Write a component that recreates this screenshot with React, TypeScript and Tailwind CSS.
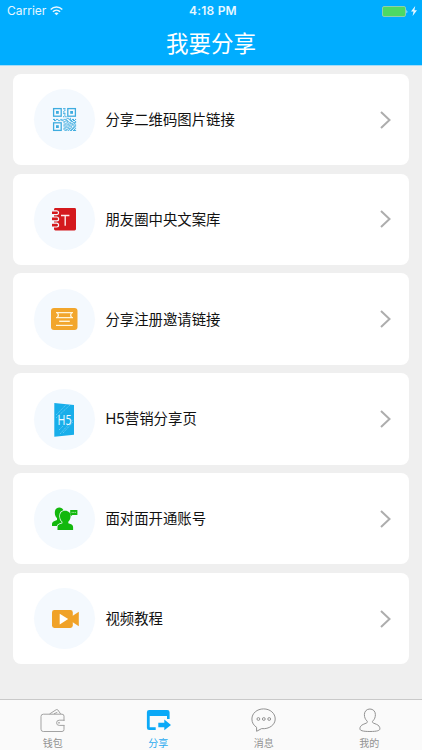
import React from 'react';

const qrModules = [
  '110', '010', '100', '110', '010', '101',
];

const qrBody = [
  '0000000000000110100000',
  '1101100110111001101101',
  '0110011011001100110110',
  '0000000000110110011001',
  '0000000000100101100111',
  '0000000000011010111010',
  '0000000000110111001101',
  '0000000000101001110011',
  '0000000000011110010110',
  '0000000000110011101101',
  '0000000000101101011010',
  '0000000000011010110111',
];

const QrIcon = () => (
  <svg viewBox="0 0 61 61" className="h-full w-full" fill="#3eacdf">
    {[[19, 19], [33.2, 19], [19, 33.2]].map(([x, y]) => (
      <g key={`${x}-${y}`}>
        <rect x={x + 0.6} y={y + 0.6} width="7.6" height="7.6" fill="none" stroke="#3eacdf" strokeWidth="1.3" />
        <rect x={x + 3} y={y + 3} width="2.8" height="2.8" />
      </g>
    ))}
    {qrModules.map((row, r) =>
      row.split('').map((c, i) =>
        c === '1' && <rect key={`${r}-${i}`} x={29.2 + i * 1.05} y={19 + r * 1.6} width="1.2" height="1.3" />
      )
    )}
    {qrBody.map((row, r) =>
      row.split('').map((c, i) =>
        c === '1' && <rect key={`b${r}-${i}`} x={19 + i * 1.05} y={28.8 + r * 1.1} width="1.05" height="1.1" />
      )
    )}
  </svg>
);

const NotebookIcon = () => (
  <svg viewBox="0 0 61 61" className="h-full w-full">
    <rect x="20" y="19" width="22" height="22.4" rx="1.4" fill="#d4191d" />
    {[22.2, 28.4, 34.6].map((y) => (
      <g key={y}>
        <path d={`M18 ${y - 0.4}h4.7a1.9 1.9 0 0 1 0 3.8H18`} fill="#d4191d" stroke="#f4f9fe" strokeWidth="1.2" />
        <rect x="18" y={y + 0.9} width="4.2" height="1.5" rx=".7" fill="#d4191d" />
      </g>
    ))}
    <path d="M27 26.5H35.4M31.2 26.5V36.8" stroke="#fdeaea" strokeWidth="1.4" fill="none" />
  </svg>
);

const InviteIcon = () => (
  <svg viewBox="0 0 61 61" className="h-full w-full">
    <rect x="17" y="19" width="26.5" height="22" rx="3" fill="#f2a62c" />
    <g fill="none" stroke="#fff4d8" strokeWidth="1.2">
      <path d="M22 23.7H39M22 28.7H39" />
      <path d="M23.3 23.7q2.2 2.5 0 5M37.7 23.7q-2.2 2.5 0 5" />
      <path d="M25.2 32.3H35.8" strokeWidth="1.4" />
      <path d="M22 36.4H38.7" />
    </g>
  </svg>
);

const H5Icon = () => (
  <svg viewBox="0 0 61 61" className="h-full w-full">
    <path d="M20.3 14L40 16V45.7L20.3 47.8Z" fill="#18aeea" />
    <g stroke="#7bd3f6" strokeWidth=".7" strokeDasharray="1.5 .7">
      <path d="M22 26L32 15.8M22 29L36 16M29 44L39 33M26 45L39 30.5M25 41L29 37" />
    </g>
    <text x="23.6" y="35.8" fill="#f2fbff" fontSize="14" textLength="14" lengthAdjust="spacingAndGlyphs" fontFamily="Open Sans, sans-serif">H5</text>
  </svg>
);

const PeopleIcon = () => (
  <svg viewBox="0 0 61 61" className="h-full w-full" fill="#13b80d">
    <path d="M25.3 18.5c3 0 4.7 2.2 4.5 5.2-.2 2.7-1.4 4.1-2.2 5.2v2l4 2.6V37H18v-1.8c0-1.7 1-2.5 2.6-3.1l2.4-1v-2c-1.2-1.2-2.2-3-2.2-5.4 0-3 1.5-5.2 4.5-5.2Z" />
    <path d="M31.2 21.8c3.4 0 5.5 2.3 5.4 5.4-.1 2.5-1 4.3-2.3 5.6v1.4l2.8 1c1.400.5 2 1.600 2 3v2.800H23.500v-2.800c0-1.600.6-2.500 2-3l2.900-1v-1.400c-1.400-1.300-2.400-3.300-2.400-5.600 0-3.200 1.900-5.400 5.200-5.400Z" stroke="#f4f9fe" strokeWidth="1.5" paintOrder="stroke" />
    <path d="M36.2 21h7.2v5h-5.1l-1.4 1.2V26h-.7Z" />
    <path d="M37.6 23.4h4.7" stroke="#a7e8a5" strokeWidth="1" strokeDasharray="1.1 .5" />
  </svg>
);

const VideoIcon = () => (
  <svg viewBox="0 0 61 61" className="h-full w-full">
    <rect x="18" y="22" width="20.8" height="18" rx="2.4" fill="#f0a228" />
    <path d="M38 28.2L44.8 23.8V38.2L38 33.8Z" fill="#f0a228" />
    <path d="M25.7 25.7L34.2 31L25.7 36.5Z" fill="#fff" />
  </svg>
);

const items = [
  { title: '分享二维码图片链接', icon: <QrIcon /> },
  { title: '朋友圈中央文案库', icon: <NotebookIcon /> },
  { title: '分享注册邀请链接', icon: <InviteIcon /> },
  { title: 'H5营销分享页', icon: <H5Icon /> },
  { title: '面对面开通账号', icon: <PeopleIcon /> },
  { title: '视频教程', icon: <VideoIcon /> },
];

const tabs = [
  {
    label: '钱包',
    icon: (
      <g fill="none" stroke="#a3a3a3" strokeWidth="1">
        <path d="M26 13V8.2a2 2 0 0 0-2-2H5.3A2.3 2.3 0 0 0 3 8.5v12.7a2.3 2.3 0 0 0 2.3 2.3H24a2 2 0 0 0 2-2V17" />
        <path d="M26.4 12.2h-5.2a2.6 2.6 0 0 0 0 5.2h5.2" />
        <path d="M11.5 6L18.2 1.7q1-.6 1.7.3L22.7 6M16 5.8l3.3-1.5" />
        <circle cx="21" cy="14.8" r=".5" />
      </g>
    ),
  },
  {
    label: '分享',
    active: true,
    icon: (
      <g fill="#0ba9f7">
        <path d="M5.2 2H23.3a2.3 2.3 0 0 1 2.3 2.3V11h-2.6V8H5.7v11.3h6V22H5.2A2.3 2.3 0 0 1 2.9 19.7V4.3A2.3 2.3 0 0 1 5.2 2Z" />
        <path d="M14.3 14.8H20.3V11.6L27 17L20.3 22.3V19.2H14.3Z" />
      </g>
    ),
  },
  {
    label: '消息',
    icon: (
      <g fill="none" stroke="#929292" strokeWidth="1">
        <path d="M14.6 .9C8 .9 2.9 5.3 2.9 11c0 3.7 1.9 6.500 4.700 8.300v4l5-2.700c7.500.8 13.600-3.700 13.600-9.600C26.200 5.300 21.200.9 14.600.9Z" />
        <circle cx="9.4" cy="11" r="1.4" />
        <circle cx="14.8" cy="11" r="1.4" />
        <circle cx="20.2" cy="11" r="1.4" />
      </g>
    ),
  },
  {
    label: '我的',
    icon: (
      <path d="M14.9 1C11.7 1 9.4 3.3 9.4 6.6c0 2.7.9 4.7 2.5 6.3 1 1 .5 1.7-.6 2.2l-3.1 1.3c-2 .8-3.3 2.3-3.3 4.4 0 1.6 2.4 2.7 10 2.7s10-1.1 10-2.7c0-2.1-1.3-3.6-3.3-4.4l-3.1-1.3c-1.1-.5-1.6-1.2-.6-2.2 1.6-1.6 2.5-3.6 2.5-6.3C20.4 3.3 18.1 1 14.9 1Z" fill="none" stroke="#929292" strokeWidth="1" />
    ),
  },
];

const StatusBar = () => (
  <div className="grid h-[22px] grid-cols-3 items-center pr-[5px] pl-[7px] text-[12px] leading-none text-[#e7f7ff]">
    <div className="flex items-center gap-1">
      <span>Carrier</span>
      <svg width="13" height="10" viewBox="0 0 13 10" fill="none" stroke="currentColor" strokeWidth="1.5">
        <path d="M.7 3.5C4 .1 9 .1 12.3 3.5M2.9 5.7c2.1-2.1 5.1-2.1 7.2 0" />
        <path d="M6.5 9.3L4.4 7.2q2.1-1.6 4.2 0Z" fill="currentColor" stroke="none" />
      </svg>
    </div>
    <span className="pl-0.5 text-center font-semibold tracking-[0.2px]">4:18 PM</span>
    <div className="flex items-center justify-end gap-[3px]">
      <svg width="26" height="11" viewBox="0 0 26 11">
        <rect x=".5" y=".5" width="23" height="10" rx="1.5" fill="#4cd964" stroke="#8ccfae" />
        <path d="M24.5 3.5q1.5 2 0 4Z" fill="#d9f5ff" />
      </svg>
      <svg width="6" height="10" viewBox="0 0 6 10" fill="#e7f7ff">
        <path d="M4.2 0L0 5.6H2.5L1.6 10L6 4.2H3.4Z" />
      </svg>
    </div>
  </div>
);

const App: React.FC = () => {
  return (
    <div className="flex h-[750px] w-[422px] flex-col overflow-hidden bg-[#efefef] font-['Inter','Noto_Sans_CJK_SC',sans-serif]">
      <header className="h-[66px] shrink-0 border-b border-[#a5dcf8] bg-[#00adff]">
        <StatusBar />
        <h1 className="text-center text-[22.5px] leading-[43px] font-normal text-white">我要分享</h1>
      </header>

      <main className="flex flex-1 flex-col gap-[8.3px] px-[13.4px] pt-[7.8px]">
        {items.map((item) => (
          <div key={item.title} className="flex h-[91.5px] shrink-0 items-center rounded-[8px] bg-white pr-[18px] pl-[20.6px]">
            <div className="mt-[0.6px] h-[61px] w-[61px] shrink-0 rounded-full bg-[#f4f9fe]">{item.icon}</div>
            <span className="ml-[10.4px] flex-1 pt-[1px] text-[14.4px] leading-5 font-normal text-[#111]">{item.title}</span>
            <svg width="11" height="18" viewBox="0 0 11 18" fill="none" stroke="#adadad" strokeWidth="2">
              <path d="M1 1L9.5 9L1 17" />
            </svg>
          </div>
        ))}
      </main>

      <nav className="grid h-[51px] shrink-0 grid-cols-4 border-t border-[#c9c9c9] bg-[#fafafa]">
        {tabs.map((tab) => (
          <div key={tab.label} className="flex flex-col items-center pt-[7.5px]">
            <svg width="29" height="25" viewBox="0 0 29 25">{tab.icon}</svg>
            <span className={tab.active ? 'mt-[3px] text-[10px] leading-[15px] text-[#2aaaf0]' : 'mt-[3px] text-[10px] leading-[15px] text-[#929292]'}>
              {tab.label}
            </span>
          </div>
        ))}
      </nav>
    </div>
  );
};

export default App;
